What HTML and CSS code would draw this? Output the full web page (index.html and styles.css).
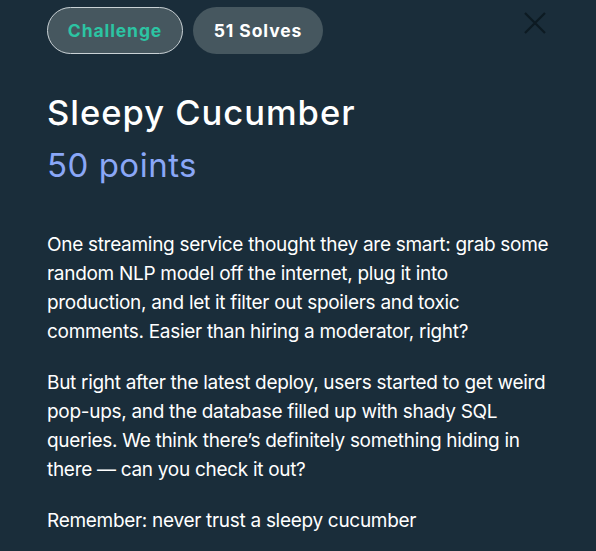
FILE: index.html
```html
<!DOCTYPE html>
<html>
<head>
<meta charset="utf-8">
<link rel="stylesheet" href="styles.css">
</head>
<body>
<div class="modal">
  <div class="top">
    <div class="tags">
      <span class="pill pill-challenge">Challenge</span>
      <span class="pill pill-solves">51 Solves</span>
    </div>
    <button class="close" aria-label="Close">
      <svg width="22" height="22" viewBox="0 0 22 22"><path d="M1 1 L21 21 M21 1 L1 21" stroke="#0d1a22" stroke-width="2.2" fill="none"/></svg>
    </button>
  </div>
  <h1 class="title">Sleepy Cucumber</h1>
  <div class="points">50 points</div>
  <div class="desc">
    <p>One streaming service thought they are smart: grab some<br>random NLP model off the internet, plug it into<br>production, and let it filter out spoilers and toxic<br>comments. Easier than hiring a moderator, right?</p>
    <p>But right after the latest deploy, users started to get weird<br>pop-ups, and the database filled up with shady SQL<br>queries. We think there’s definitely something hiding in<br>there — can you check it out?</p>
    <p>Remember: never trust a sleepy cucumber</p>
  </div>
</div>
</body>
</html>
```

FILE: styles.css
```css
html, body {
  margin: 0;
  padding: 0;
  background: #1a2d3a;
  height: 100%;
}
.modal {
  padding: 7px 50px 0 47px;
  font-family: "Inter", "Noto Sans", sans-serif;
  color: #ffffff;
}
.top {
  display: flex;
  justify-content: space-between;
  align-items: flex-start;
}
.tags {
  display: flex;
  gap: 10px;
}
.pill {
  display: inline-flex;
  align-items: center;
  justify-content: center;
  height: 47px;
  box-sizing: border-box;
  border-radius: 24px;
  background: #46575f;
  font-weight: 700;
  font-size: 17.5px;
  letter-spacing: 0.9px;
}
.pill-challenge {
  width: 136px;
  border: 1px solid #c9d1d5;
  color: #2cc4a3;
}
.pill-solves {
  width: 130px;
  color: #ffffff;
}
.close {
  background: none;
  border: 0;
  padding: 0;
  margin: 5px 0 0 0;
  width: 22px;
  height: 22px;
  cursor: pointer;
}
.close svg { display: block; }
.title {
  margin: 39px 0 0 0;
  font-size: 34.5px;
  font-weight: 500;
  line-height: 40px;
  letter-spacing: 1px;
}
.points {
  margin-top: 12px;
  font-size: 33px;
  line-height: 40px;
  letter-spacing: 0.5px;
  color: #8aa7f7;
}
.desc {
  margin-top: 45px;
  font-size: 19px;
  line-height: 29px;
  letter-spacing: -0.3px;
  white-space: nowrap;
}
.desc p {
  margin: 0 0 22px 0;
}
```
